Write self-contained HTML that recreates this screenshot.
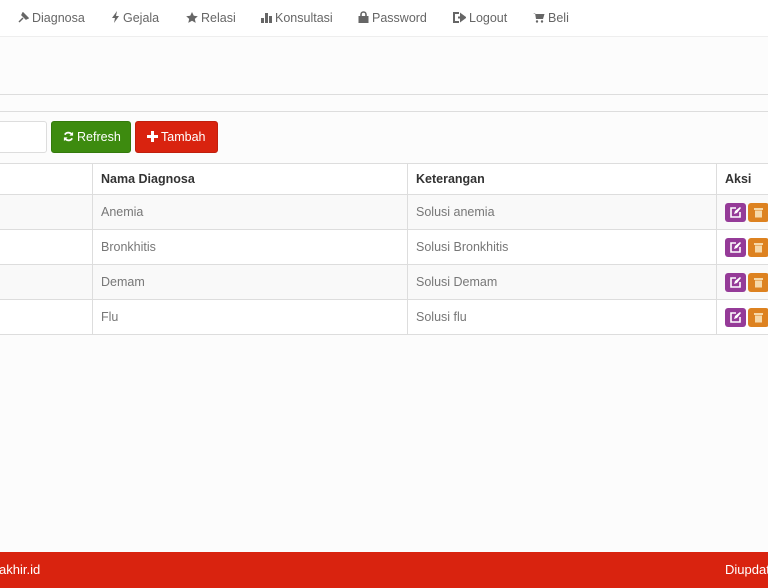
<!DOCTYPE html>
<html><head><meta charset="utf-8"><style>
*{box-sizing:border-box;margin:0;padding:0}
body{width:768px;height:588px;overflow:hidden;background:#fcfcfc;font-family:"Liberation Sans",sans-serif;font-size:12.5px;color:#555;position:relative}
.nav{position:absolute;left:0;top:0;width:768px;height:37px;background:#fff;border-bottom:1px solid #eee}
.nav span{position:absolute;top:11px;color:#666;font-size:12.5px}
.nav svg{vertical-align:-1px;margin-right:3px}
.hr{position:absolute;left:0;width:768px;height:1px;background:#ddd}
.inp{position:absolute;left:-5px;top:121px;width:52px;height:32px;background:#fff;border:1px solid #ddd;border-radius:3px}
.btn{position:absolute;top:121px;height:32px;border-radius:3px;color:#fff;font-size:12.5px;line-height:31px;padding-left:11px}
table{position:absolute;left:-10px;top:163px;border-collapse:collapse;background:#fff;table-layout:fixed;width:826px}
td,th{border:1px solid #ddd;height:35px;padding:0 8px;text-align:left;font-size:12.5px;vertical-align:middle}
th{height:31px;color:#333;font-weight:bold;background:#fff}
tr.o td{background:#f9f9f9}
td{color:#777}
.ib{display:inline-block;width:21px;height:19px;border-radius:3px;vertical-align:middle;margin-right:2px;position:relative}
.ib svg{position:absolute;left:5px;top:4px}
.foot{position:absolute;left:0;top:552px;width:768px;height:36px;background:#d9230f;color:#fff;font-size:13px;line-height:36px}
</style></head><body>
<div class="nav">
<span style="left:18px"><svg width="11" height="11" viewBox="0 0 11 11"><path d="M1 10L5 6M4 3l4 4 2-1-5-5z" stroke="#666" fill="#666" stroke-width="1.5"/></svg>Diagnosa</span>
<span style="left:111px"><svg width="9" height="12" viewBox="0 0 9 12"><path d="M6 0L1 7h3l-1 5 5-7H5z" fill="#666"/></svg>Gejala</span>
<span style="left:186px"><svg width="12" height="11" viewBox="0 0 12 11"><path d="M6 0l1.8 3.8 4 .4-3 2.7.9 4L6 8.8 2.3 10.9l.9-4-3-2.7 4-.4z" fill="#666"/></svg>Relasi</span>
<span style="left:261px"><svg width="11" height="11" viewBox="0 0 11 11"><rect x="0" y="6" width="3" height="5" fill="#666"/><rect x="4" y="1" width="3" height="10" fill="#666"/><rect x="8" y="4" width="3" height="7" fill="#666"/></svg>Konsultasi</span>
<span style="left:358px"><svg width="11" height="12" viewBox="0 0 11 12"><path d="M3 5V3.5a2.5 2.5 0 015 0V5" stroke="#666" fill="none" stroke-width="1.6"/><rect x="0.5" y="5" width="10" height="7" fill="#666"/></svg>Password</span>
<span style="left:453px"><svg width="13" height="11" viewBox="0 0 13 11"><path d="M6 1H1v9h5" stroke="#666" fill="none" stroke-width="2"/><path d="M5 5.5h4M8 2.5l4 3-4 3z" stroke="#666" fill="#666" stroke-width="2"/></svg>Logout</span>
<span style="left:533px"><svg width="12" height="11" viewBox="0 0 12 11"><path d="M0 1h2l1 6h7l1.5-5H3" fill="#666"/><circle cx="4" cy="9.5" r="1.2" fill="#666"/><circle cx="9" cy="9.5" r="1.2" fill="#666"/></svg>Beli</span>
</div>
<div class="hr" style="top:94px"></div>
<div class="hr" style="top:111px"></div>
<div class="inp"></div>
<div class="btn" style="left:51px;width:80px;background:#3d8b0f;border:1px solid #347a0c"><svg width="11" height="11" viewBox="0 0 12 12" style="vertical-align:-1px;margin-right:3px"><path d="M10 4.5A4.5 4.5 0 002 4M2 7.5A4.5 4.5 0 0010 8" stroke="#fff" stroke-width="2" fill="none"/><path d="M11 1v4H7zM1 11V7h4z" fill="#fff"/></svg>Refresh</div>
<div class="btn" style="left:135px;width:83px;background:#d9230f;border:1px solid #c01f0d"><svg width="11" height="11" viewBox="0 0 11 11" style="vertical-align:-1px;margin-right:3px"><path d="M4 0h3v4h4v3H7v4H4V7H0V4h4z" fill="#fff"/></svg>Tambah</div>
<table>
<colgroup><col style="width:102px"><col style="width:315px"><col style="width:309px"><col style="width:100px"></colgroup>
<tr><th></th><th>Nama Diagnosa</th><th>Keterangan</th><th>Aksi</th></tr>
<tr class="o"><td></td><td>Anemia</td><td>Solusi anemia</td><td><i class="ib" style="background:#953b98"><svg width="11" height="11" viewBox="0 0 11 11"><path d="M6 1H1v9h9V5" stroke="#fff" stroke-width="1.6" fill="none"/><path d="M4 7l1-3 5-4 1 1-4 5z" fill="#fff"/></svg></i><i class="ib" style="background:#dd8220"><svg width="11" height="11" viewBox="0 0 11 11"><rect x="1" y="1" width="9" height="2" fill="#f6d8a8"/><rect x="2" y="3.5" width="7" height="7" fill="#f6d8a8"/></svg></i></td></tr>
<tr><td></td><td>Bronkhitis</td><td>Solusi Bronkhitis</td><td><i class="ib" style="background:#953b98"><svg width="11" height="11" viewBox="0 0 11 11"><path d="M6 1H1v9h9V5" stroke="#fff" stroke-width="1.6" fill="none"/><path d="M4 7l1-3 5-4 1 1-4 5z" fill="#fff"/></svg></i><i class="ib" style="background:#dd8220"><svg width="11" height="11" viewBox="0 0 11 11"><rect x="1" y="1" width="9" height="2" fill="#f6d8a8"/><rect x="2" y="3.5" width="7" height="7" fill="#f6d8a8"/></svg></i></td></tr>
<tr class="o"><td></td><td>Demam</td><td>Solusi Demam</td><td><i class="ib" style="background:#953b98"><svg width="11" height="11" viewBox="0 0 11 11"><path d="M6 1H1v9h9V5" stroke="#fff" stroke-width="1.6" fill="none"/><path d="M4 7l1-3 5-4 1 1-4 5z" fill="#fff"/></svg></i><i class="ib" style="background:#dd8220"><svg width="11" height="11" viewBox="0 0 11 11"><rect x="1" y="1" width="9" height="2" fill="#f6d8a8"/><rect x="2" y="3.5" width="7" height="7" fill="#f6d8a8"/></svg></i></td></tr>
<tr><td></td><td>Flu</td><td>Solusi flu</td><td><i class="ib" style="background:#953b98"><svg width="11" height="11" viewBox="0 0 11 11"><path d="M6 1H1v9h9V5" stroke="#fff" stroke-width="1.6" fill="none"/><path d="M4 7l1-3 5-4 1 1-4 5z" fill="#fff"/></svg></i><i class="ib" style="background:#dd8220"><svg width="11" height="11" viewBox="0 0 11 11"><rect x="1" y="1" width="9" height="2" fill="#f6d8a8"/><rect x="2" y="3.5" width="7" height="7" fill="#f6d8a8"/></svg></i></td></tr>
</table>
<div class="foot"><span style="position:absolute;left:-1px">akhir.id</span><span style="position:absolute;left:725px">Diupdate</span></div>
</body></html>
